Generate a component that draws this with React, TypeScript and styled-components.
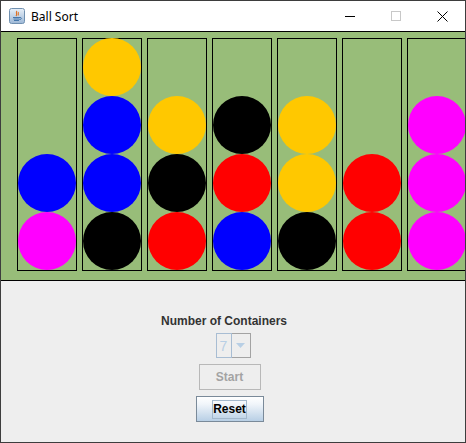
import React from 'react';
import styled, { createGlobalStyle } from 'styled-components';

const GlobalStyle = createGlobalStyle`
  html, body {
    margin: 0;
    padding: 0;
    background: #eeeeee;
  }
`;

const Window = styled.div`
  width: 466px;
  height: 443px;
  box-sizing: border-box;
  border: 1px solid #3d3d3d;
  background: #eeeeee;
  display: flex;
  flex-direction: column;
  overflow: hidden;
  font-family: 'Liberation Sans', Arial, sans-serif;
`;

const TitleBar = styled.div`
  height: 30px;
  flex-shrink: 0;
  background: #ffffff;
  display: flex;
  align-items: center;
`;

const AppIcon = styled.div`
  width: 16px;
  height: 16px;
  margin: 0 6px 0 8px;
  display: flex;
`;

const Title = styled.span`
  font-family: 'Segoe UI', 'Noto Sans', 'Liberation Sans', sans-serif;
  font-size: 12px;
  color: #000;
  flex: 1;
`;

const CaptionButton = styled.div`
  width: 46px;
  height: 30px;
  display: flex;
  align-items: center;
  justify-content: center;
`;

const Board = styled.div`
  height: 250px;
  box-sizing: border-box;
  flex-shrink: 0;
  background: #98bd79;
  border-top: 1px solid #000;
  border-bottom: 1px solid #000;
  padding: 6px 0 0 16px;
  display: flex;
  gap: 5px;
  overflow: hidden;
`;

const Tube = styled.div`
  width: 58px;
  height: 231px;
  flex-shrink: 0;
  border: 1px solid #000;
  display: flex;
  flex-direction: column;
  justify-content: flex-end;
`;

const Ball = styled.div<{ $color: string }>`
  width: 58px;
  height: 58px;
  flex-shrink: 0;
  border-radius: 50%;
  background: ${(p) => p.$color};
`;

const Controls = styled.div`
  flex: 1;
  display: flex;
  flex-direction: column;
  align-items: center;
  padding-top: 33px;
`;

const Label = styled.div`
  font-size: 12px;
  line-height: 15px;
  font-weight: bold;
  color: #333333;
  margin-right: 18px;
`;

const Combo = styled.div`
  margin-top: 4px;
  width: 35px;
  height: 25px;
  box-sizing: border-box;
  border: 1px solid #a3a3a3;
  display: flex;
  background: #eeeeee;
`;

const ComboField = styled.div`
  width: 16px;
  box-sizing: border-box;
  border: 1px solid #a8bdd3;
  margin: -1px 0 -1px -1px;
  display: flex;
  align-items: center;
  justify-content: center;
  font-size: 14px;
  color: #b8cfe5;
`;

const ComboArrow = styled.div`
  flex: 1;
  display: flex;
  align-items: center;
  justify-content: center;
`;

const Button = styled.button<{ $width: number; $enabled?: boolean }>`
  margin: 6px 7px 0 0;
  width: ${(p) => p.$width}px;
  height: 26px;
  box-sizing: border-box;
  padding: 0;
  font-family: 'Liberation Sans', Arial, sans-serif;
  font-size: 12px;
  font-weight: bold;
  display: flex;
  align-items: center;
  justify-content: center;
  border: 1px solid ${(p) => (p.$enabled ? '#7a8a99' : '#b8b8b8')};
  color: ${(p) => (p.$enabled ? '#000' : '#a3a3a3')};
  background: ${(p) =>
    p.$enabled ? 'linear-gradient(#ffffff 0%, #f0f5fa 30%, #b8cfe5 100%)' : '#eeeeee'};
`;

const FocusRing = styled.span`
  border: 1px solid #a3b8cc;
  padding: 1px 0 2px;
  line-height: 14px;
`;

const tubes: string[][] = [
  ['#0000ff', '#ff00ff'],
  ['#ffc800', '#0000ff', '#0000ff', '#000000'],
  ['#ffc800', '#000000', '#ff0000'],
  ['#000000', '#ff0000', '#0000ff'],
  ['#ffc800', '#ffc800', '#000000'],
  ['#ff0000', '#ff0000'],
  ['#ff00ff', '#ff00ff', '#ff00ff'],
];

const JavaIcon = () => (
  <svg width="16" height="16" viewBox="0 0 16 16">
    <defs>
      <linearGradient id="jg" x1="0" y1="0" x2="0" y2="1">
        <stop offset="0" stopColor="#e8f0f8" />
        <stop offset="1" stopColor="#9db8d6" />
      </linearGradient>
    </defs>
    <rect x="0.5" y="0.5" width="15" height="15" rx="2" fill="url(#jg)" stroke="#7090b0" />
    <path d="M8 3 C6 5 9 6 7 8 M9.5 4 C8.5 5.5 10 6 9 7.5" stroke="#e07020" strokeWidth="1.1" fill="none" />
    <path d="M4 9.5 H11 M4.5 11 H10.5 M5 12.5 H10 M11 9.5 C13 9.5 13 11.5 10.5 11.5" stroke="#3a6ea5" strokeWidth="0.9" fill="none" />
  </svg>
);

export default function App() {
  return (
    <>
      <GlobalStyle />
      <Window>
        <TitleBar>
          <AppIcon>
            <JavaIcon />
          </AppIcon>
          <Title>Ball Sort</Title>
          <CaptionButton>
            <svg width="10" height="10" viewBox="0 0 10 10">
              <path d="M0 5.5 H10" stroke="#000" strokeWidth="1" />
            </svg>
          </CaptionButton>
          <CaptionButton>
            <svg width="10" height="10" viewBox="0 0 10 10">
              <rect x="0.5" y="0.5" width="9" height="9" fill="none" stroke="#c8c8c8" />
            </svg>
          </CaptionButton>
          <CaptionButton>
            <svg width="11" height="11" viewBox="0 0 11 11">
              <path d="M0.5 0.5 L10.5 10.5 M10.5 0.5 L0.5 10.5" stroke="#000" strokeWidth="1" />
            </svg>
          </CaptionButton>
        </TitleBar>
        <Board>
          {tubes.map((balls, i) => (
            <Tube key={i}>
              {balls.map((c, j) => (
                <Ball key={j} $color={c} />
              ))}
            </Tube>
          ))}
        </Board>
        <Controls>
          <Label>Number of Containers</Label>
          <Combo>
            <ComboField>7</ComboField>
            <ComboArrow>
              <svg width="9" height="5" viewBox="0 0 9 5">
                <path d="M0 0 H9 L4.5 5 Z" fill="#b8cfe5" />
              </svg>
            </ComboArrow>
          </Combo>
          <Button $width={62}>Start</Button>
          <Button $width={68} $enabled>
            <FocusRing>Reset</FocusRing>
          </Button>
        </Controls>
      </Window>
    </>
  );
}
